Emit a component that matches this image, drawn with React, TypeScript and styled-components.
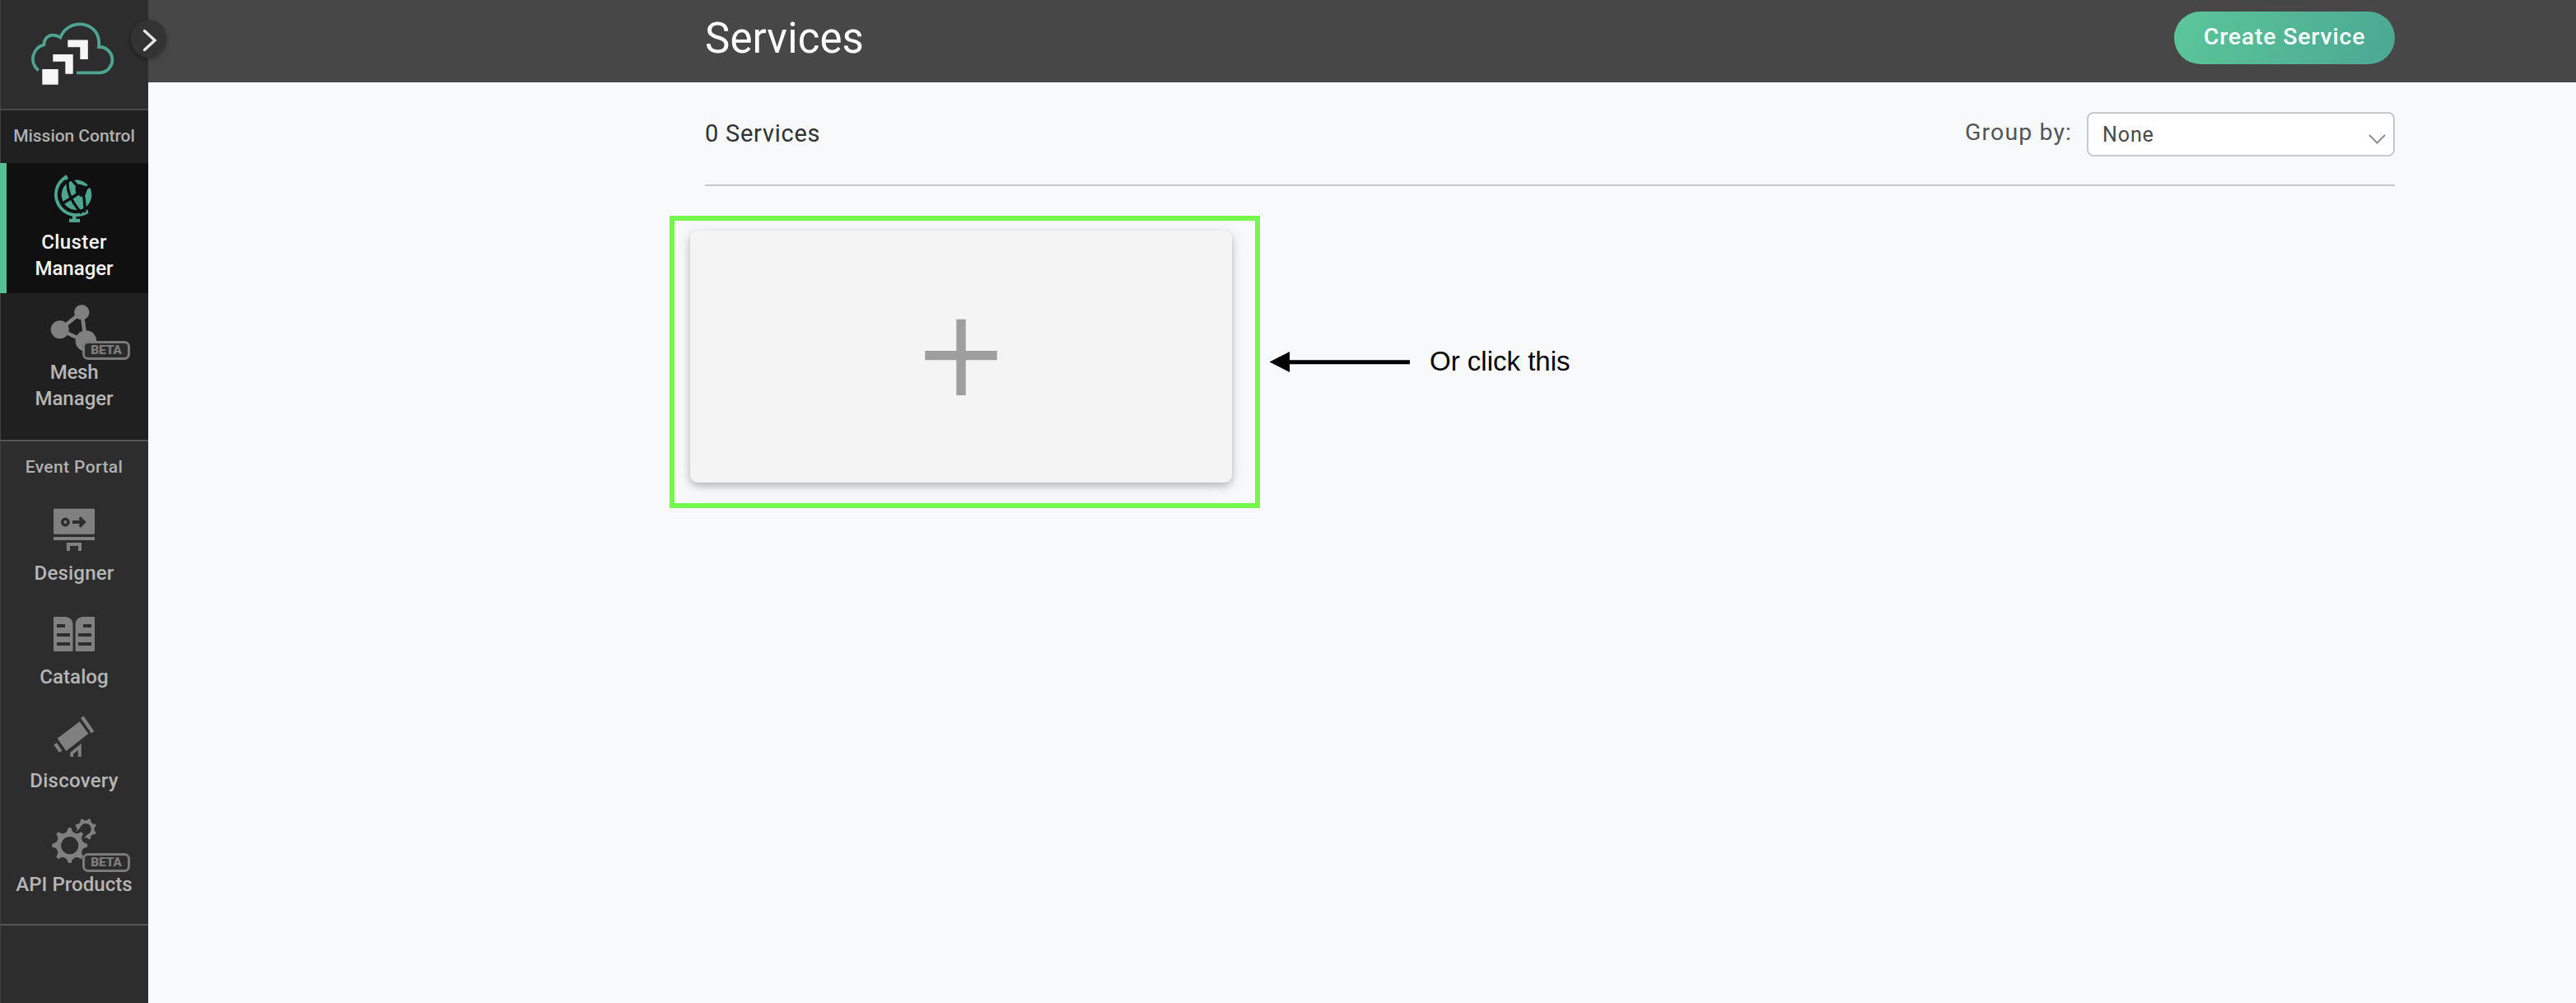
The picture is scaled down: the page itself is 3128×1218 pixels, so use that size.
import React from "react";
import styled, { createGlobalStyle } from "styled-components";

const GlobalStyle = createGlobalStyle`
  *, *::before, *::after { box-sizing: border-box; }
  html, body { margin: 0; padding: 0; background: #f8f9fb; }
  body { font-family: Roboto, "Liberation Sans", sans-serif; overflow: hidden; }
`;

const Shell = styled.div`
  display: flex;
  width: 3128px;
  height: 1218px;
  background: #f8f9fb;
`;

const Sidebar = styled.nav`
  position: relative;
  flex: none;
  width: 180px;
  background: #2d2d2d;
  box-shadow: inset 1px 0 0 #404040;
`;

const LogoArea = styled.div`
  height: 134px;
  padding: 27px 0 0 38px;
  border-bottom: 2px solid #4b4b4b;
`;

const Toggle = styled.button`
  position: absolute;
  left: 159px;
  top: 24px;
  width: 43px;
  height: 46px;
  padding: 0;
  border: 0;
  border-radius: 50%;
  background: #333;
  box-shadow: 0 2px 6px rgba(0, 0, 0, 0.3);
  svg { display: block; }
`;

const Section = styled.section<{ $dark?: boolean; $bottom: number }>`
  padding-bottom: ${(p) => p.$bottom}px;
  border-bottom: 2px solid #555;
  background: ${(p) => (p.$dark ? "#202020" : "transparent")};
  box-shadow: inset 1px 0 0 #404040;
`;

const SectionTitle = styled.h2<{ $spacing: number }>`
  margin: 0;
  height: 64px;
  line-height: 62px;
  font-size: 21px;
  font-weight: 500;
  letter-spacing: ${(p) => p.$spacing}px;
  text-align: center;
  white-space: nowrap;
  color: #b0b0b0;
`;

const NavItem = styled.a<{ $active?: boolean }>`
  position: relative;
  display: flex;
  flex-direction: column;
  align-items: center;
  padding: 8px 0 14px;
  color: ${(p) => (p.$active ? "#f6f6f6" : "#b6b6b6")};
  background: ${(p) => (p.$active ? "#101010" : "transparent")};
  box-shadow: ${(p) => (p.$active ? "inset 8px 0 0 #57bf95" : "none")};
`;

const NavIcon = styled.svg`
  display: block;
  width: 60px;
  height: 68px;
  margin-bottom: 4px;
  overflow: visible;
`;

const NavLabel = styled.span<{ $spacing: number }>`
  font-size: 24px;
  font-weight: 500;
  line-height: 32px;
  letter-spacing: ${(p) => p.$spacing}px;
  text-align: center;
  white-space: nowrap;
`;

const Badge = styled.span<{ $dark?: boolean }>`
  position: absolute;
  left: 100px;
  top: 58px;
  width: 58px;
  height: 23px;
  border: 3px solid #7a7a7a;
  border-radius: 7px;
  background: ${(p) => (p.$dark ? "#2b2b2b" : "#2d2d2d")};
  color: #7c7c7c;
  font-size: 15.5px;
  font-weight: 900;
  line-height: 17px;
  letter-spacing: -0.2px;
  text-align: center;
`;

const Main = styled.main`
  flex: 1;
  min-width: 0;
`;

const Header = styled.header`
  display: flex;
  justify-content: space-between;
  align-items: flex-start;
  height: 100px;
  padding: 14px 220px 0 676px;
  background: #474747;
`;

const PageTitle = styled.h1`
  margin: 0;
  font-size: 51px;
  font-weight: 400;
  line-height: 66px;
  letter-spacing: 0.1px;
  color: #fff;
`;

const CreateButton = styled.button`
  width: 268px;
  height: 64px;
  padding: 0 0 4px;
  border: 0;
  border-radius: 32px;
  background: linear-gradient(110deg, #5bc69a 0%, #4ba892 100%);
  color: #fff;
  font-family: inherit;
  font-size: 28.5px;
  font-weight: 500;
  letter-spacing: 0.8px;
`;

const Content = styled.div`
  padding: 0 220px 0 676px;
`;

const Toolbar = styled.div`
  display: flex;
  justify-content: space-between;
  align-items: flex-start;
  height: 126px;
  padding-top: 36px;
  border-bottom: 2px solid #c5c6c8;
`;

const Count = styled.div`
  font-size: 29px;
  line-height: 52px;
  letter-spacing: 0.75px;
  color: #2f3133;
`;

const GroupBy = styled.div`
  display: flex;
  gap: 18px;
  line-height: 50px;
  font-size: 28.5px;
  letter-spacing: 1.1px;
  color: #535557;
`;

const Select = styled.div`
  display: flex;
  align-items: flex-start;
  justify-content: space-between;
  width: 374px;
  height: 54px;
  padding: 0 8px 0 17px;
  border: 2px solid #c8c9cb;
  border-radius: 8px;
  background: #fff;
  color: #48494b;
  font-size: 25px;
  line-height: 52px;
  letter-spacing: 0.9px;
  svg { margin-top: 23px; }
`;

const CreateRow = styled.div`
  display: flex;
  align-items: center;
  margin: 36px 0 0 -43px;
`;

const Highlight = styled.div`
  padding: 12px 28px 25px 19px;
  border: 6px solid #73f84b;
`;

const AddCard = styled.button`
  display: flex;
  align-items: center;
  justify-content: center;
  width: 658px;
  height: 306px;
  padding: 2px 0 0;
  border: 0;
  border-radius: 9px;
  background: #f4f4f4;
  box-shadow: 0 4px 10px rgba(0, 0, 0, 0.24), 0 4px 24px rgba(0, 0, 0, 0.07);
`;

const Arrow = styled.svg`
  flex: none;
  margin: 0 23px 0 11px;
`;

const Note = styled.span`
  padding-bottom: 2px;
  font-family: "Liberation Sans", Arial, sans-serif;
  font-size: 33px;
  line-height: 40px;
  color: #000;
`;

function gear(cx: number, cy: number, outer: number, inner: number, teeth: number) {
  const step = (Math.PI * 2) / teeth;
  const at = (r: number, a: number) =>
    `${(cx + r * Math.sin(a)).toFixed(2)} ${(cy - r * Math.cos(a)).toFixed(2)}`;
  let d = "";
  for (let i = 0; i < teeth; i++) {
    const a = i * step;
    d += `${i ? "L" : "M"}${at(outer, a - step * 0.11)}L${at(outer, a + step * 0.11)}`;
    d += `Q${at(inner + 1, a + step * 0.2)} ${at(inner, a + step * 0.36)}`;
    d += `L${at(inner, a + step * 0.64)}Q${at(inner + 1, a + step * 0.8)} ${at(outer, a + step * 0.89)}`;
  }
  return d + "Z";
}

const LogoSvg = styled.svg`
  display: block;
`;

const Logo = () => (
  <LogoSvg width="102" height="78" viewBox="0 0 102 78">
    <path
      d="M8.7 58.5A17.8 17.8 0 0 1 15.3 27.3C15.8 16.5 25.5 12.3 35.3 18.5C44 -3.5 75 -2.5 81.3 18.5Q82.6 23 82 30A15.7 15.7 0 0 1 84.3 61.3H55"
      fill="none"
      stroke="#4da591"
      strokeWidth="3.8"
    />
    <path d="M13.3 57H32.7V75.7H13.3ZM26.3 39H50.7V62.7H41.3V47.8H26.3ZM44.3 21.4H68.8V45H59.3V30.2H44.3Z" fill="#f6f6f6" />
  </LogoSvg>
);

const GlobeIcon = () => (
  <NavIcon viewBox="0 0 60 68">
    <path d="M20 9A24.8 24.8 0 1 0 45.5 51.6" fill="none" stroke="#4ca58f" strokeWidth="3.8" />
    <path d="M17.5 9L20.3 6L23 10.6L20 13.5ZM43 50.5L46 48.3L47.5 52.6L43.5 55Z" fill="#4ca58f" />
    <path d="M28 55H32.3V59.7H37V64H24V59.7H28Z" fill="#4ca58f" />
    <circle cx="33" cy="30.8" r="18.3" fill="#4ca58f" />
    <g fill="none" stroke="#101010" strokeWidth="3.4">
      <path d="M22.4 12Q19.5 31 39 53" />
      <path d="M14 42Q24 36.5 38 27" />
      <path d="M27 12L37 23" />
      <path d="M40 26L51 18" strokeWidth="4" />
      <path d="M40 26Q44 38 42.5 52" />
    </g>
    <path d="M31.5 21L36 17.5L44 20L46 24L43.5 31L38 33L32 28Z" fill="#101010" />
  </NavIcon>
);

const MeshIcon = () => (
  <NavIcon viewBox="0 0 60 68" fill="#808080">
    <path d="M12.7 36.3L39.3 15L44.3 51Z" fill="none" stroke="#808080" strokeWidth="4.6" />
    <circle cx="12.7" cy="36.3" r="11" />
    <circle cx="39.3" cy="15.2" r="9.1" />
    <circle cx="44.4" cy="50" r="12.8" />
  </NavIcon>
);

const DesignerIcon = () => (
  <NavIcon viewBox="0 0 60 68">
    <rect x="5" y="9.7" width="50" height="31" rx="1.3" fill="#808080" />
    <rect x="5" y="44" width="50" height="4" fill="#808080" />
    <path d="M22.9 61V53H37V61" fill="none" stroke="#808080" strokeWidth="4" />
    <circle cx="19.3" cy="26" r="3.7" fill="none" stroke="#2d2d2d" strokeWidth="3.4" />
    <path d="M28 26H43M36.7 20.5L42 26L36.7 31.5" fill="none" stroke="#2d2d2d" strokeWidth="3.8" />
  </NavIcon>
);

const CatalogIcon = () => (
  <NavIcon viewBox="0 0 60 68">
    <path
      d="M6.3 15H19.5Q28.5 16 28.5 24.5V55.7Q28.5 57 27.2 57H6.3Q5 57 5 55.7V16.3Q5 15 6.3 15ZM53.7 15H40.5Q31.6 16 31.6 24.5V55.7Q31.6 57 32.9 57H53.7Q55 57 55 55.7V16.3Q55 15 53.7 15Z"
      fill="#808080"
    />
    <path d="M9 24H19V28H9ZM9 35H25V39H9ZM9 46H25V50H9ZM41 24H51V28H41ZM35 35H51V39H35ZM35 46H51V50H35Z" fill="#2d2d2d" />
  </NavIcon>
);

const DiscoveryIcon = () => (
  <NavIcon viewBox="0 0 60 68">
    <path d="M9.7 36.7L36.7 16.3L47.3 31L20.3 52Z" fill="#808080" />
    <path d="M39.8 10.7L52.6 29.3M7 43.2L13.7 52.7" stroke="#808080" strokeWidth="4.2" />
    <path d="M27.2 59V54.6L36.8 47V59" fill="none" stroke="#808080" strokeWidth="3.8" />
  </NavIcon>
);

const GearsIcon = () => (
  <NavIcon viewBox="0 0 60 68">
    <path d={gear(44, 20.8, 13.2, 10.6, 8)} fill="#808080" transform="rotate(22.5 44 20.8)" />
    <circle cx="44" cy="20.8" r="6.8" fill="#2d2d2d" />
    <path d="M44 21L34.5 30.5" stroke="#2d2d2d" strokeWidth="12" />
    <path d={gear(24.7, 40.7, 21.5, 16.4, 8)} fill="#808080" />
    <circle cx="24.7" cy="40.7" r="10.6" fill="#2d2d2d" />
  </NavIcon>
);

export default function App() {
  return (
    <>
      <GlobalStyle />
      <Shell>
        <Sidebar>
          <LogoArea>
            <Logo />
          </LogoArea>
          <Section $dark $bottom={20}>
            <SectionTitle $spacing={-0.05}>Mission Control</SectionTitle>
            <NavItem $active>
              <GlobeIcon />
              <NavLabel $spacing={0.4}>Cluster</NavLabel>
              <NavLabel $spacing={0}>Manager</NavLabel>
            </NavItem>
            <NavItem>
              <MeshIcon />
              <NavLabel $spacing={-0.2}>Mesh</NavLabel>
              <NavLabel $spacing={0}>Manager</NavLabel>
              <Badge $dark>BETA</Badge>
            </NavItem>
          </Section>
          <Section $bottom={18}>
            <SectionTitle $spacing={0.4}>Event Portal</SectionTitle>
            <NavItem>
              <DesignerIcon />
              <NavLabel $spacing={0.2}>Designer</NavLabel>
            </NavItem>
            <NavItem>
              <CatalogIcon />
              <NavLabel $spacing={0.1}>Catalog</NavLabel>
            </NavItem>
            <NavItem>
              <DiscoveryIcon />
              <NavLabel $spacing={0.25}>Discovery</NavLabel>
            </NavItem>
            <NavItem>
              <GearsIcon />
              <NavLabel $spacing={0.05}>API Products</NavLabel>
              <Badge>BETA</Badge>
            </NavItem>
          </Section>
          <Toggle aria-label="Expand">
            <svg width="43" height="46" viewBox="0 0 43 46">
              <path d="M16.5 13.5L29 25L16.5 36.5" fill="none" stroke="#e6e6e6" strokeWidth="3.4" strokeLinecap="round" />
            </svg>
          </Toggle>
        </Sidebar>
        <Main>
          <Header>
            <PageTitle>Services</PageTitle>
            <CreateButton>Create Service</CreateButton>
          </Header>
          <Content>
            <Toolbar>
              <Count>0 Services</Count>
              <GroupBy>
                Group by:
                <Select>
                  None
                  <svg width="24" height="16" viewBox="0 0 24 16">
                    <path d="M3 3L12.5 12.5L22 3" fill="none" stroke="#8e8e8e" strokeWidth="2" />
                  </svg>
                </Select>
              </GroupBy>
            </Toolbar>
            <CreateRow>
              <Highlight>
                <AddCard aria-label="Add service">
                  <svg width="90" height="94" viewBox="0 0 90 94">
                    <path
                      d="M39.3 0.7H50.7V38.9H88.7V50.3H50.7V93H39.3V50.3H1.3V38.9H39.3Z"
                      fill="#9e9e9e"
                    />
                  </svg>
                </AddCard>
              </Highlight>
              <Arrow width="172" height="26" viewBox="0 0 172 26">
                <path d="M0.5 12.5L25 0V10.2H171V15.2H25V25Z" fill="#000" />
              </Arrow>
              <Note>Or click this</Note>
            </CreateRow>
          </Content>
        </Main>
      </Shell>
    </>
  );
}
